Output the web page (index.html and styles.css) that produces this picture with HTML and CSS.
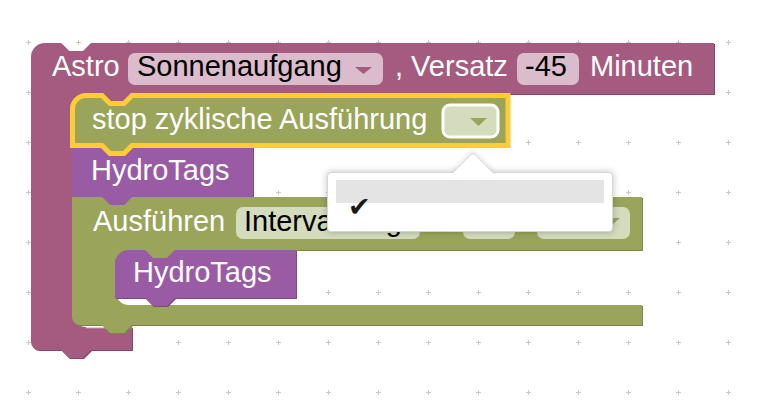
FILE: index.html
```html
<!DOCTYPE html>
<html lang="de">
<head>
    <meta charset="UTF-8">
    <title>Blockly Arbeitsbereich</title>
    <link rel="stylesheet" href="styles.css">
</head>
<body>
    <div class="workspace">
        <svg class="canvas" width="764" height="420" viewBox="0 0 764 420">
            <defs>
                <pattern id="grid" x="3" y="17" width="50" height="50" patternUnits="userSpaceOnUse">
                    <path class="grid-mark" d="M23 25.5 H28 M25.5 23 V28"/>
                </pattern>
            </defs>
            <rect width="764" height="420" fill="url(#grid)"/>

            <!-- Astro -->
            <g class="block astro">
                <path class="dark" transform="translate(1,1)" d="M31,57 A14,14 0 0 1 45,43 H61 l8,8 14,0 8,-8 H714 V94 H132 l-8,8 -14,0 -8,-8 H86 A14,14 0 0 0 72,108 V313 A14,14 0 0 0 86,327 H132 V350 H91 l-8,8 -14,0 -8,-8 H39 A8,8 0 0 1 31,342 Z"/>
                <path class="main" d="M31,57 A14,14 0 0 1 45,43 H61 l8,8 14,0 8,-8 H714 V94 H132 l-8,8 -14,0 -8,-8 H86 A14,14 0 0 0 72,108 V313 A14,14 0 0 0 86,327 H132 V350 H91 l-8,8 -14,0 -8,-8 H39 A8,8 0 0 1 31,342 Z"/>
                <path class="light" d="M86,327.5 H131.5"/>
                <text class="label" x="52" y="76">Astro</text>
                <rect class="field" x="128" y="53" width="255" height="32" rx="7"/>
                <text class="value" x="137" y="76">Sonnenaufgang</text>
                <polygon class="arrow" points="355,67 372,67 363.5,74"/>
                <text class="label" x="395" y="76">, Versatz</text>
                <rect class="field" x="517" y="53" width="62" height="32" rx="7"/>
                <text class="value" x="525" y="76">-45</text>
                <text class="label" x="590" y="76">Minuten</text>
            </g>

            <!-- stop zyklische Ausführung -->
            <g class="block logic">
                <path class="main" d="M72.5,109 A13.5,13.5 0 0 1 86,95.5 H102 l8,8 14,0 8,-8 H508 V145.5 H132 l-8,8 -14,0 -8,-8 H72.5 Z"/>
            </g>

            <!-- HydroTags -->
            <g class="block tags">
                <path class="dark" transform="translate(1,1)" d="M72,146 H102 l8,8 14,0 8,-8 H253 V197 H132 l-8,8 -14,0 -8,-8 H72 Z"/>
                <path class="main" d="M72,146 H102 l8,8 14,0 8,-8 H253 V197 H132 l-8,8 -14,0 -8,-8 H72 Z"/>
                <text class="label" x="91" y="180">HydroTags</text>
            </g>

            <!-- Ausführen -->
            <g class="block logic">
                <path class="dark" transform="translate(1,1)" d="M72,197 H102 l8,8 14,0 8,-8 H642 V250 H175 l-8,8 -14,0 -8,-8 H129 A14,14 0 0 0 115,264 V291 A14,14 0 0 0 129,305 H642 V325 H132 l-8,8 -14,0 -8,-8 H80 A8,8 0 0 1 72,317 Z"/>
                <path class="main" d="M72,197 H102 l8,8 14,0 8,-8 H642 V250 H175 l-8,8 -14,0 -8,-8 H129 A14,14 0 0 0 115,264 V291 A14,14 0 0 0 129,305 H642 V325 H132 l-8,8 -14,0 -8,-8 H80 A8,8 0 0 1 72,317 Z"/>
                <text class="label" x="93" y="231">Ausführen</text>
                <rect class="field" x="236" y="207" width="184" height="32" rx="7"/>
                <text class="value" x="244" y="231">Intervall-Tag</text>
                <rect class="field" x="463" y="207" width="52" height="32" rx="7"/>
                <rect class="field" x="537" y="207" width="93" height="32" rx="7"/>
                <polygon class="arrow" points="604,218 620,218 612,225"/>
            </g>

            <!-- HydroTags innen -->
            <g class="block tags">
                <path class="dark" transform="translate(1,1)" d="M115,264 A14,14 0 0 1 129,250 H145 l8,8 14,0 8,-8 H296 V298 H175 l-8,8 -14,0 -8,-8 H115 Z"/>
                <path class="main" d="M115,264 A14,14 0 0 1 129,250 H145 l8,8 14,0 8,-8 H296 V298 H175 l-8,8 -14,0 -8,-8 H115 Z"/>
                <text class="label" x="133" y="282">HydroTags</text>
            </g>

            <!-- Auswahlrahmen -->
            <g class="block logic">
                <path class="selected" d="M72.5,109 A13.5,13.5 0 0 1 86,95.5 H102 l8,8 14,0 8,-8 H508 V145.5 H132 l-8,8 -14,0 -8,-8 H72.5 Z"/>
                <text class="label" x="92" y="129">stop zyklische Ausführung</text>
                <rect class="field open" x="443" y="105" width="55" height="32" rx="7"/>
                <polygon class="arrow" points="470,118 487,118 478.5,126"/>
            </g>
        </svg>

        <div class="menu">
            <div class="menu-arrow"></div>
            <div class="menu-item highlight"></div>
            <div class="menu-item"><span class="check">✔</span></div>
        </div>
    </div>
</body>
</html>
```

FILE: styles.css
```css
body {
    margin: 0;
    background-color: #fff;
    font-family: "Liberation Sans", Arial, sans-serif;
}
.workspace {
    position: relative;
    width: 764px;
    height: 420px;
    overflow: hidden;
}
.canvas {
    display: block;
}
.grid-mark {
    stroke: #c8c8c8;
    stroke-width: 1;
    fill: none;
}
.label, .value {
    font-family: "Liberation Sans", Arial, sans-serif;
    font-size: 29px;
}
.label {
    fill: #fff;
}
.value {
    fill: #000;
}
.light {
    fill: none;
    stroke: #fff;
    stroke-width: 1.5;
    opacity: 0.7;
}

.astro .main { fill: #a55b80; }
.astro .dark { fill: #844866; }
.astro .field { fill: #dbbccc; }
.astro .arrow { fill: #a55b80; }

.logic .main { fill: #9aa55b; }
.logic .dark { fill: #7b8449; }
.logic .field { fill: #d5dbbd; }
.logic .arrow { fill: #9aa55b; }

.tags .main { fill: #9a5ba5; }
.tags .dark { fill: #7b4984; }

.selected {
    fill: none;
    stroke: #fc3;
    stroke-width: 5;
}
.field.open {
    stroke: #fff;
    stroke-width: 3;
}

.menu {
    position: absolute;
    left: 327px;
    top: 172px;
    width: 286px;
    height: 60px;
    box-sizing: border-box;
    padding: 7px 8px;
    background-color: #fff;
    border: 1px solid #d6d6d6;
    border-radius: 4px;
    box-shadow: 0 0 7px rgba(0, 0, 0, 0.25);
}
.menu-arrow {
    position: absolute;
    left: 130px;
    top: -15px;
    width: 30px;
    height: 30px;
    background-color: #fff;
    border-top: 1px solid #d6d6d6;
    border-left: 1px solid #d6d6d6;
    border-top-left-radius: 4px;
    box-sizing: border-box;
    transform: rotate(45deg);
    box-shadow: -2px -2px 4px rgba(0, 0, 0, 0.08);
}
.menu-item {
    position: relative;
    height: 22px;
    padding-left: 12px;
}
.menu-item.highlight {
    height: 23px;
    background-color: #e4e4e4;
}
.check {
    display: block;
    margin-top: -8px;
    font-family: "DejaVu Sans", sans-serif;
    font-size: 27px;
    line-height: 24px;
    color: #1a1a1a;
}
```
